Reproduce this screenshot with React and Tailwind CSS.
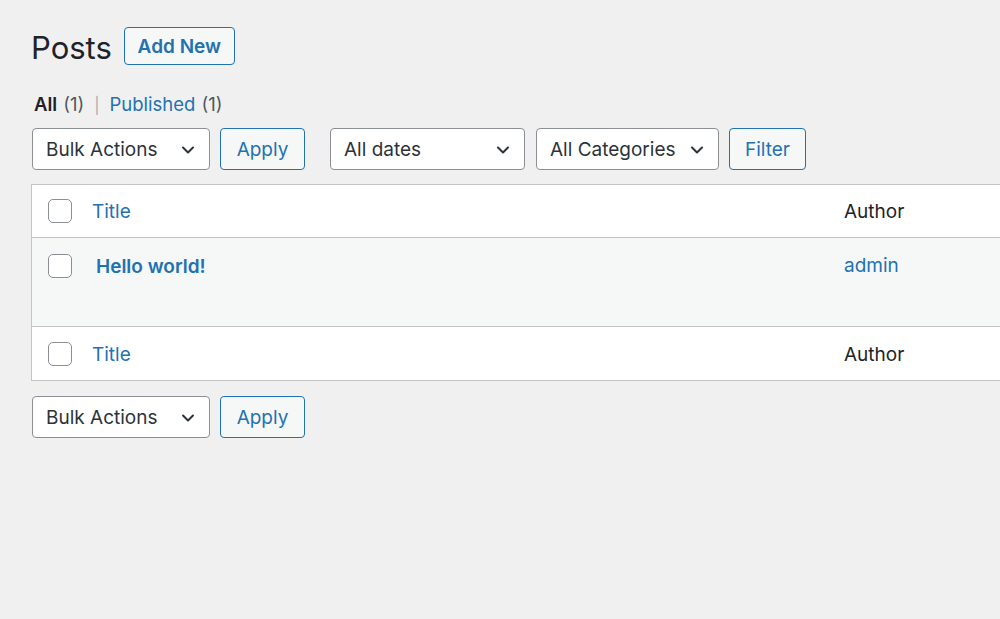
import React from "react";

function Chevron() {
  return (
    <svg width="16" height="16" viewBox="0 0 16 16" className="shrink-0">
      <path d="M3 5.5 L8 10.5 L13 5.5" fill="none" stroke="#2c3338" strokeWidth="2" strokeLinecap="round" strokeLinejoin="round" />
    </svg>
  );
}

function Select({ label, w }) {
  return (
    <div className={`h-[42px] ${w} flex items-center justify-between pl-[13px] pr-[13px] pt-[2px] bg-white border border-[#8c8f94] rounded-[4px] text-[19px] text-[#2c3338]`}>
      <span>{label}</span>
      <Chevron />
    </div>
  );
}

function Btn({ label, w }) {
  return (
    <div className={`h-[42px] ${w} flex items-center justify-center pt-[2px] bg-[#f6f7f7] border border-[#2271b1] rounded-[4px] text-[19px] text-[#2271b1]`}>
      {label}
    </div>
  );
}

function Check() {
  return <div className="w-[24px] h-[24px] rounded-[5px] border-[1.5px] border-[#8c8f94] bg-white shrink-0" />;
}

export default function App() {
  return (
    <div className="w-[1000px] h-[619px] bg-[#f0f0f1] overflow-hidden" style={{ fontFamily: "Inter, 'Noto Sans', sans-serif" }}>
      <div className="pl-[31px] pt-[27px]">
        <div className="flex items-center gap-[12px] h-[38px]">
          <h1 className="text-[31px] text-[#1d2327] font-normal leading-none pt-[3px]">Posts</h1>
          <div className="h-[38px] w-[111px] flex items-center justify-center pt-[2px] bg-[#f6f7f7] border border-[#2271b1] rounded-[4px] text-[19px] font-semibold text-[#2271b1]">
            Add New
          </div>
        </div>
        <div className="mt-[28px] pl-[3px] flex items-center text-[18.5px] h-[24px]">
          <span className="font-semibold text-[#1d2327]">All</span>
          <span className="ml-[6px] text-[#50575e]">(1)</span>
          <span className="mx-[10px] text-[#a7aaad] text-[16px]">|</span>
          <span className="text-[#2271b1]">Published</span>
          <span className="ml-[6px] text-[#50575e]">(1)</span>
        </div>
        <div className="mt-[11px] flex items-center pl-[1px]">
          <Select label="Bulk Actions" w="w-[178px]" />
          <div className="ml-[10px]"><Btn label="Apply" w="w-[85px]" /></div>
          <div className="ml-[25px]"><Select label="All dates" w="w-[195px]" /></div>
          <div className="ml-[11px]"><Select label="All Categories" w="w-[183px]" /></div>
          <div className="ml-[10px]"><Btn label="Filter" w="w-[77px]" /></div>
        </div>
        <div className="mt-[14px] w-[1000px] border border-[#c3c4c7] bg-white">
          <div className="h-[53px] flex items-center border-b border-[#c3c4c7] text-[19px]">
            <div className="w-[60px] pl-[16px]"><Check /></div>
            <div className="w-[752px] text-[#2271b1] pt-[3px]">Title</div>
            <div className="text-[#1d2327] pt-[3px]">Author</div>
          </div>
          <div className="h-[89px] flex items-start bg-[#f6f7f7] border-b border-[#c3c4c7] pt-[16px] text-[19px]">
            <div className="w-[60px] pl-[16px]"><Check /></div>
            <div className="w-[752px] pl-[4px] font-semibold text-[#2271b1] leading-[24px] pt-[1px]">Hello world!</div>
            <div className="text-[#2271b1] leading-[22px] pt-[1px]">admin</div>
          </div>
          <div className="h-[53px] flex items-center text-[19px]">
            <div className="w-[60px] pl-[16px]"><Check /></div>
            <div className="w-[752px] text-[#2271b1] pt-[3px]">Title</div>
            <div className="text-[#1d2327] pt-[3px]">Author</div>
          </div>
        </div>
        <div className="mt-[15px] flex items-center pl-[1px]">
          <Select label="Bulk Actions" w="w-[178px]" />
          <div className="ml-[10px]"><Btn label="Apply" w="w-[85px]" /></div>
        </div>
      </div>
    </div>
  );
}
